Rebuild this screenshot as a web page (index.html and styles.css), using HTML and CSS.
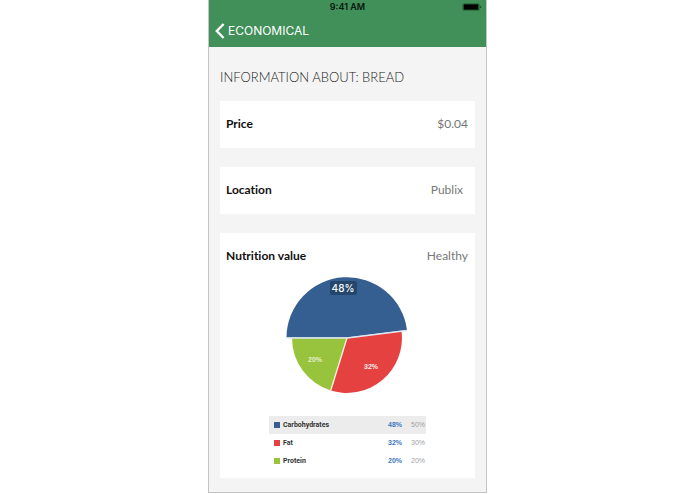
FILE: index.html
```html
<!DOCTYPE html>
<html lang="en">
<head>
<meta charset="utf-8">
<meta name="viewport" content="width=device-width, initial-scale=1">
<title>Information about: Bread</title>
<link rel="stylesheet" href="styles.css">
</head>
<body>
<div class="phone">
  <header class="topbar">
    <div class="status">
      <span class="time">9:41 AM</span>
      <svg class="battery" width="20" height="8" viewBox="0 0 20 8" aria-hidden="true">
        <rect x="0.5" y="0.5" width="17" height="7" rx="1.5" fill="#10361f" opacity=".65"/>
        <rect x="2" y="1.5" width="14" height="5" rx="0.5" fill="#000"/>
        <path d="M18.3 2.7v2.6q1-.3 1-1.3t-1-1.3z" fill="#10361f"/>
      </svg>
    </div>
    <a class="back" href="#">
      <svg width="10" height="16" viewBox="0 0 10 16" aria-hidden="true"><path d="M8.6 1L1.8 8l6.8 7" fill="none" stroke="#fff" stroke-width="2.4"/></svg>
      <span>ECONOMICAL</span>
    </a>
  </header>
  <main class="content">
    <h1 class="title">INFORMATION ABOUT: BREAD</h1>
    <section class="card">
      <div class="row"><h2 class="label">Price</h2><span class="value">$0.04</span></div>
    </section>
    <section class="card">
      <div class="row row-inset"><h2 class="label">Location</h2><span class="value">Publix</span></div>
    </section>
    <section class="card nutrition">
      <div class="row"><h2 class="label">Nutrition value</h2><span class="value">Healthy</span></div>
      <svg class="pie" width="123" height="118" viewBox="0 0 123 118" role="img" aria-label="Nutrition breakdown">
        <path d="M61 61H6A55 55 0 0 0 44.7 113.5z" fill="#98c33c"/>
        <path d="M61 61L44.7 113.5A55 55 0 0 0 115.5 54z" fill="#e64141"/>
        <path d="M61 61L44.7 113.5" stroke="#fff4df" stroke-width="1.3"/>
        <path d="M61 60.5H.5A60.5 60.5 0 0 1 121 53z" fill="#365f91"/>
        <path d="M.5 61H61L121 53.5" fill="none" stroke="#dfe8f1" stroke-width="1.3"/>
        <rect x="44" y="4" width="27" height="14" rx="2" fill="#24466b"/>
        <text class="pie-main" x="57" y="15">48%</text>
        <text class="pie-small" x="29" y="85" opacity=".75">20%</text>
        <text class="pie-small" x="85" y="92" opacity=".9">32%</text>
      </svg>
      <table class="legend">
        <tbody>
          <tr class="active"><th scope="row"><i class="swatch blue"></i>Carbohydrates</th><td class="actual">48%</td><td class="goal">50%</td></tr>
          <tr><th scope="row"><i class="swatch red"></i>Fat</th><td class="actual">32%</td><td class="goal">30%</td></tr>
          <tr><th scope="row"><i class="swatch green"></i>Protein</th><td class="actual">20%</td><td class="goal">20%</td></tr>
        </tbody>
      </table>
    </section>
  </main>
</div>
</body>
</html>
```
FILE: styles.css
```css
* { box-sizing: border-box; }
body { margin: 0; background: #fff; font-family: Lato, sans-serif; font-variant-ligatures: none; }
.phone {
  max-width: 279px;
  margin: 0 auto;
  background: #f4f4f4;
  border: 1px solid #c4c4c4;
  border-top: 0;
}
.topbar { background: #418f59; }
.status {
  display: grid;
  grid-template-columns: 1fr auto 1fr;
  align-items: center;
  height: 14px;
  padding: 0 4px;
  font: 600 9px/14px Inter, sans-serif;
  color: #06170c;
}
.time { grid-column: 2; }
.battery { justify-self: end; }
.back {
  display: flex;
  align-items: center;
  gap: 3px;
  height: 33px;
  padding-left: 6px;
  color: #fff;
  font: 12px/16px Inter, sans-serif;
  text-decoration: none;
}
.content {
  display: flex;
  flex-direction: column;
  gap: 19px;
  padding: 21px 11px 14px;
}
.title {
  margin: 0 0 -4px;
  font-size: 13px;
  line-height: 18px;
  font-weight: 300;
  color: #222;
}
.card { background: #fff; }
.row {
  display: flex;
  align-items: center;
  justify-content: space-between;
  height: 47px;
  padding: 0 7px 2px 6px;
}
.row-inset { padding-right: 12px; }
.label { margin: 0; font-size: 12px; line-height: 16px; font-weight: 700; color: #111; }
.value { font-size: 12px; line-height: 16px; color: #777; }
.nutrition { padding-bottom: 8px; }
.pie { display: block; margin: -3px auto 21px; font-family: "Liberation Sans", sans-serif; fill: #fff; text-anchor: middle; }
.pie-main { font-family: Inter, sans-serif; font-size: 10px; font-weight: 500; }
.pie-small { font-size: 7px; font-weight: 700; }
.legend {
  width: 157px;
  margin: 0 auto;
  border-collapse: collapse;
  font: 700 7px/18px "Liberation Sans", sans-serif;
}
.legend th { padding: 0 0 0 5px; text-align: left; color: #333; font-family: Roboto, sans-serif; }
.legend td { width: 23px; padding: 0 1px 0 0; text-align: right; }
.active { background: #ececec; }
.swatch { display: inline-block; width: 6px; height: 6px; margin-right: 3px; vertical-align: middle; }
.blue { background: #365f91; }
.red { background: #e64141; }
.green { background: #98c33c; }
.legend .actual { color: #3c78bb; }
.legend .goal { color: #a0a0a0; font-weight: 400; }
```
